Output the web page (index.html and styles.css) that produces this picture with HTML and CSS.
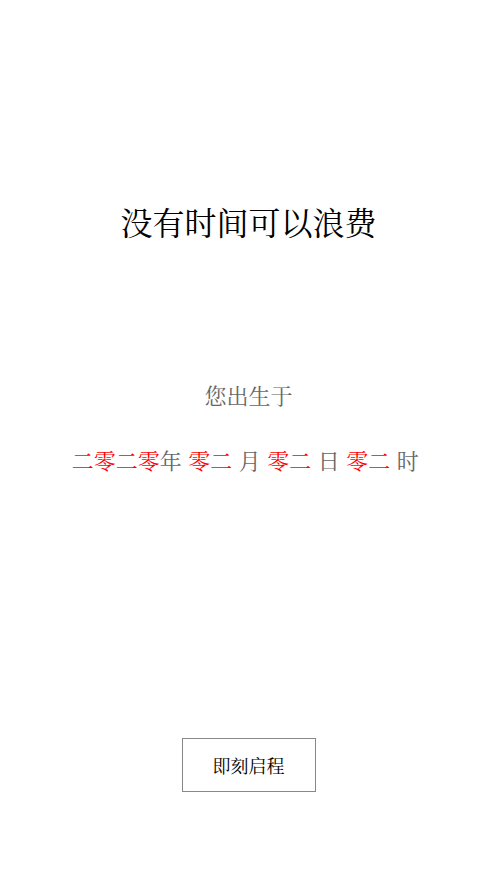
FILE: index.html
```html
<!DOCTYPE html>
<html lang="zh-CN">
<head>
<meta charset="utf-8">
<title>没有时间可以浪费</title>
<link rel="stylesheet" href="styles.css">
</head>
<body>
<main class="page">
  <h1 class="title">没有时间可以浪费</h1>
  <p class="subtitle">您出生于</p>
  <p class="birth"><span class="num">二零二零</span>年 <span class="num">零二</span> 月 <span class="num">零二</span> 日 <span class="num">零二</span> 时 </p>
  <button class="start">即刻启程</button>
</main>
</body>
</html>
```
FILE: styles.css
```css
html, body {
  margin: 0;
  padding: 0;
  background: #ffffff;
}
.page {
  display: flex;
  flex-direction: column;
  align-items: center;
  padding-top: 208px;
  font-family: "Liberation Serif", "Noto Serif CJK SC", "Noto Sans CJK SC", serif;
}
.title {
  margin: 0;
  font-size: 32px;
  line-height: 32px;
  font-weight: normal;
  color: #000;
}
.subtitle {
  margin: 146px 0 0;
  font-size: 22px;
  line-height: 22px;
  color: #666;
}
.birth {
  margin: 43px 0 0;
  font-size: 22px;
  line-height: 22px;
  color: #666;
  white-space: pre;
  word-spacing: 1px;
}
.num {
  color: #ff0000;
}
.start {
  margin-top: 265px;
  width: 134px;
  height: 54px;
  background: #fff;
  border: 1px solid #888;
  font-family: inherit;
  font-size: 18px;
  color: #000;
  padding: 0;
}
```
